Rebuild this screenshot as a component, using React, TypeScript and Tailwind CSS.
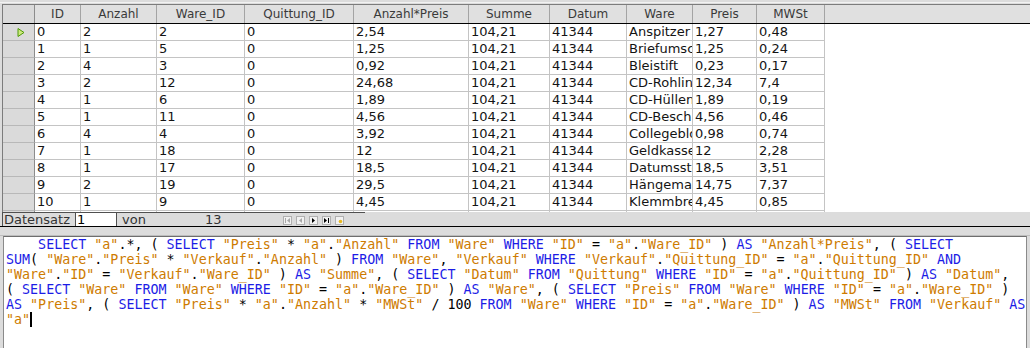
import React from 'react'

const COLS = [
  { name: 'ID', w: 'w-[46px]' },
  { name: 'Anzahl', w: 'w-[76px]' },
  { name: 'Ware_ID', w: 'w-[88px]' },
  { name: 'Quittung_ID', w: 'w-[109px]' },
  { name: 'Anzahl*Preis', w: 'w-[115px]' },
  { name: 'Summe', w: 'w-[81px]' },
  { name: 'Datum', w: 'w-[77px]' },
  { name: 'Ware', w: 'w-[66px]' },
  { name: 'Preis', w: 'w-[64px]' },
  { name: 'MWSt', w: 'w-[68px]' },
]

const ROWS = [
  ['0', '2', '2', '0', '2,54', '104,21', '41344', 'Anspitzer', '1,27', '0,48'],
  ['1', '1', '5', '0', '1,25', '104,21', '41344', 'Briefumschläge', '1,25', '0,24'],
  ['2', '4', '3', '0', '0,92', '104,21', '41344', 'Bleistift', '0,23', '0,17'],
  ['3', '2', '12', '0', '24,68', '104,21', '41344', 'CD-Rohlinge', '12,34', '7,4'],
  ['4', '1', '6', '0', '1,89', '104,21', '41344', 'CD-Hüllen', '1,89', '0,19'],
  ['5', '1', '11', '0', '4,56', '104,21', '41344', 'CD-Beschriftung', '4,56', '0,46'],
  ['6', '4', '4', '0', '3,92', '104,21', '41344', 'Collegeblock', '0,98', '0,74'],
  ['7', '1', '18', '0', '12', '104,21', '41344', 'Geldkassette', '12', '2,28'],
  ['8', '1', '17', '0', '18,5', '104,21', '41344', 'Datumsstempel', '18,5', '3,51'],
  ['9', '2', '19', '0', '29,5', '104,21', '41344', 'Hängemappen', '14,75', '7,37'],
  ['10', '1', '9', '0', '4,45', '104,21', '41344', 'Klemmbrett', '4,45', '0,85'],
  ['11', '1', '7', '0', '', '', '', '', '', ''],
]

const SQL = [
  '    SELECT "a".*, ( SELECT "Preis" * "a"."Anzahl" FROM "Ware" WHERE "ID" = "a"."Ware_ID" ) AS "Anzahl*Preis", ( SELECT',
  'SUM( "Ware"."Preis" * "Verkauf"."Anzahl" ) FROM "Ware", "Verkauf" WHERE "Verkauf"."Quittung_ID" = "a"."Quittung_ID" AND',
  '"Ware"."ID" = "Verkauf"."Ware_ID" ) AS "Summe", ( SELECT "Datum" FROM "Quittung" WHERE "ID" = "a"."Quittung_ID" ) AS "Datum",',
  '( SELECT "Ware" FROM "Ware" WHERE "ID" = "a"."Ware_ID" ) AS "Ware", ( SELECT "Preis" FROM "Ware" WHERE "ID" = "a"."Ware_ID" )',
  'AS "Preis", ( SELECT "Preis" * "a"."Anzahl" * "MWSt" / 100 FROM "Ware" WHERE "ID" = "a"."Ware_ID" ) AS "MWSt" FROM "Verkauf" AS',
  '"a"',
]

const KEYWORDS = new Set(['SELECT', 'FROM', 'WHERE', 'AS', 'AND', 'SUM'])

function SqlLine({ line }: { line: string }) {
  const parts = line.match(/"[^"]*"|[A-Za-z_]+|[^"A-Za-z_]+/g) ?? []
  return (
    <>
      {parts.map((p, i) => {
        if (p.startsWith('"')) return <span key={i} className="text-[#ce7b00]">{p}</span>
        if (KEYWORDS.has(p)) return <span key={i} className="text-[#1c1ce6]">{p}</span>
        return <span key={i} className="text-black">{p}</span>
      })}
    </>
  )
}

function CurrentRowArrow() {
  return (
    <svg width="8" height="9" viewBox="0 0 8 9">
      <polygon points="1,0.5 7,4.5 1,8.5" fill="#cde87e" stroke="#4e9a06" strokeWidth="1" />
    </svg>
  )
}

function NavButton({ kind }: { kind: 'first' | 'prev' | 'next' | 'last' | 'new' }) {
  const off = kind === 'first' || kind === 'prev'
  const c = off ? '#a8a8a8' : '#000'
  return (
    <div className="flex h-[9px] w-[9px] items-center justify-center border border-[#b0b0b0] bg-[#f2f2f2]">
      <svg width="7" height="7" viewBox="0 0 7 7">
        {kind === 'first' && (
          <>
            <rect x="1" y="1" width="1" height="5" fill={c} />
            <polygon points="6,1 3,3.5 6,6" fill={c} />
          </>
        )}
        {kind === 'prev' && <polygon points="5,1 2,3.5 5,6" fill={c} />}
        {kind === 'next' && <polygon points="2,1 5,3.5 2,6" fill={c} />}
        {kind === 'last' && (
          <>
            <polygon points="1,1 4,3.5 1,6" fill={c} />
            <rect x="5" y="1" width="1" height="5" fill={c} />
          </>
        )}
        {kind === 'new' && <circle cx="4.5" cy="4.5" r="1.8" fill="#e8b820" />}
      </svg>
    </div>
  )
}

export default function App() {
  return (
    <div className="flex h-[348px] w-[1030px] flex-col overflow-hidden bg-[#dcdcdc] font-['DejaVu_Sans',sans-serif]">
      {/* top strip */}
      <div className="h-[4px] shrink-0">
        <div className="h-[2px]" />
        <div className="h-[1px] bg-[#f2f2f2]" />
      </div>

      {/* data grid */}
      <div className="ml-[2px] h-[208px] shrink-0 overflow-hidden border-l border-t border-[#7c7c7c] bg-white">
        <div className="flex h-[19px] border-b border-black bg-[#e0e0e0]">
          <div className="w-[32px] shrink-0 border-r border-[#8c8c8c] bg-[#dadada]" />
          {COLS.map((c) => (
            <div
              key={c.name}
              className={`${c.w} shrink-0 border-r border-[#a4a4a4] text-center text-[12px] leading-[18px] text-[#3a3a3a]`}
            >
              {c.name}
            </div>
          ))}
          <div className="flex-1" />
        </div>
        {ROWS.map((r, ri) => (
          <div key={ri} className="flex h-[17px]">
            <div className="flex w-[32px] shrink-0 items-center border-b border-r border-b-[#b8b8b8] border-r-[#8c8c8c] bg-[#dadada] pl-[14px]">
              {ri === 0 && <CurrentRowArrow />}
            </div>
            {COLS.map((c, ci) => (
              <div
                key={c.name}
                className={`${c.w} shrink-0 overflow-hidden whitespace-nowrap border-b border-r border-[#c4c4c4] pl-[2px] text-[13px] leading-[16px] text-[#141414]`}
              >
                {r[ci]}
              </div>
            ))}
            <div className="flex-1" />
          </div>
        ))}
      </div>

      {/* record navigation */}
      <div className="flex h-[15px] shrink-0 border-b border-black">
        <div className="ml-[2px] flex w-[363px] border-l border-t border-[#505050] text-[13px] leading-[13px] text-[#333]">
          <div className="w-[73px] border-r border-[#505050] pl-[1px]">Datensatz</div>
          <div className="w-[41px] border-r border-[#505050] bg-white pl-[1px] text-black">1</div>
          <div className="w-[88px] pl-[5px]">von</div>
          <div className="w-[78px]">13</div>
          <div className="flex items-start gap-[4px] pt-[3px]">
            <NavButton kind="first" />
            <NavButton kind="prev" />
            <NavButton kind="next" />
            <NavButton kind="last" />
            <NavButton kind="new" />
          </div>
        </div>
      </div>

      {/* splitter */}
      <div className="h-[9px] shrink-0 border-b border-[#bdbdbd]" />

      {/* SQL editor */}
      <div className="ml-[3px] w-[1024px] flex-1 border-l border-r border-t border-l-[#8a8a8a] border-r-[#8a8a8a] border-t-[#6e6e6e] bg-white pl-[2px] font-['DejaVu_Sans_Mono',monospace] text-[13.33px] leading-[15px]">
        {SQL.map((l, i) => (
          <div key={i} className="whitespace-pre">
            <SqlLine line={l} />
            {i === SQL.length - 1 && <span className="inline-block h-[15px] w-[2px] bg-black align-top" />}
          </div>
        ))}
      </div>
    </div>
  )
}
